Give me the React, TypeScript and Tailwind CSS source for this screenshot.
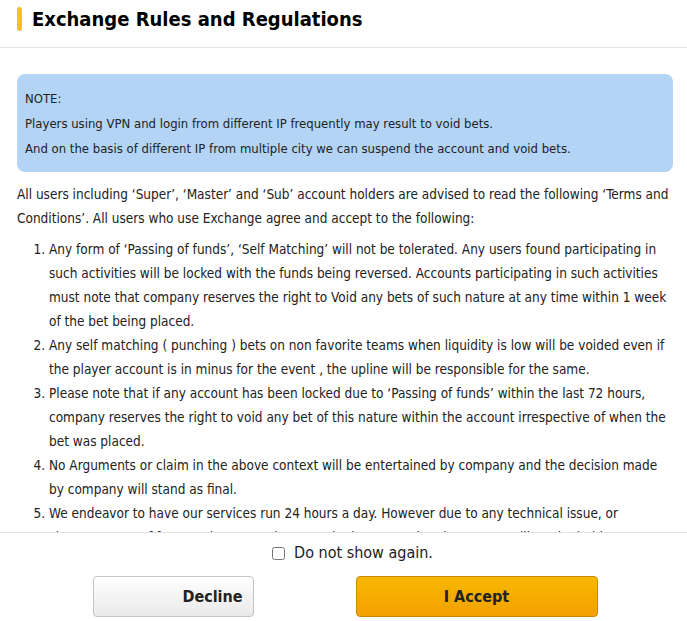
import { useState } from "react";

const rules = [
  "Any form of ‘Passing of funds’, ‘Self Matching’ will not be tolerated. Any users found participating in such activities will be locked with the funds being reversed. Accounts participating in such activities must note that company reserves the right to Void any bets of such nature at any time within 1 week of the bet being placed.",
  "Any self matching ( punching ) bets on non favorite teams when liquidity is low will be voided even if the player account is in minus for the event , the upline will be responsible for the same.",
  "Please note that if any account has been locked due to ‘Passing of funds’ within the last 72 hours, company reserves the right to void any bet of this nature within the account irrespective of when the bet was placed.",
  "No Arguments or claim in the above context will be entertained by company and the decision made by company will stand as final.",
  "We endeavor to have our services run 24 hours a day. However due to any technical issue, or circumstances of force majeure, services may be interrupted and company will not be held responsible for any loss incurred.",
];

export default function App() {
  const [checked, setChecked] = useState(false);

  return (
    <div className="h-[621px] w-full bg-white flex flex-col font-['DejaVu_Sans_Condensed','Liberation_Sans',sans-serif] text-[#222]">
      {/* Header */}
      <div className="h-[48px] shrink-0 border-b border-[#e3e3e3] flex items-start pt-[7px] pl-[17px] gap-[10px]">
        <span className="w-[5px] h-[24px] rounded-full bg-[#f8c21c]" />
        <h1 className="text-[20px] leading-[24px] font-bold text-black">Exchange Rules and Regulations</h1>
      </div>

      {/* Scroll body */}
      <div className="flex-1 overflow-hidden pl-[17px] pr-[13px] pt-[26px]">
        <div className="mr-[1px] bg-[#b3d4f5] rounded-[8px] px-[8px] pt-[12px] pb-[11px] text-[13px] leading-[25px] text-[#222]">
          <p>NOTE:</p>
          <p>Players using VPN and login from different IP frequently may result to void bets.</p>
          <p>And on the basis of different IP from multiple city we can suspend the account and void bets.</p>
        </div>

        <p className="mt-[10px] text-[13.5px] leading-[24px]">
          All users including ‘Super’, ‘Master’ and ‘Sub’ account holders are advised to read the following ‘Terms and Conditions’. All users who use Exchange agree and accept to the following:
        </p>

        <ol className="mt-[7px] pl-[32px] list-decimal text-[13.5px] leading-[24px]">
          {rules.map((r, i) => (
            <li key={i}>{r}</li>
          ))}
        </ol>
      </div>

      {/* Footer */}
      <div className="shrink-0 h-[89px] border-t border-[#e3e3e3] flex flex-col items-center">
        <label className="mt-[8px] ml-[18px] flex items-center gap-[9px] text-[16px] text-[#222]">
          <input
            type="checkbox"
            checked={checked}
            onChange={() => setChecked(!checked)}
            className="w-[13px] h-[13px]"
          />
          Do not show again.
        </label>
        <div className="mt-[11px] ml-[3px] flex gap-[102px]">
          <button className="w-[161px] h-[41px] pl-[81px] pr-[2px] rounded-[4px] border border-[#c4c4c4] bg-gradient-to-b from-[#ffffff] to-[#e9e9e9] text-[16px] font-bold text-[#222]">
            Decline
          </button>
          <button className="w-[242px] h-[41px] rounded-[4px] border border-[#c98a00] bg-gradient-to-b from-[#f7b800] to-[#f2a000] text-[16px] font-bold text-[#222]">
            I Accept
          </button>
        </div>
      </div>
    </div>
  );
}
